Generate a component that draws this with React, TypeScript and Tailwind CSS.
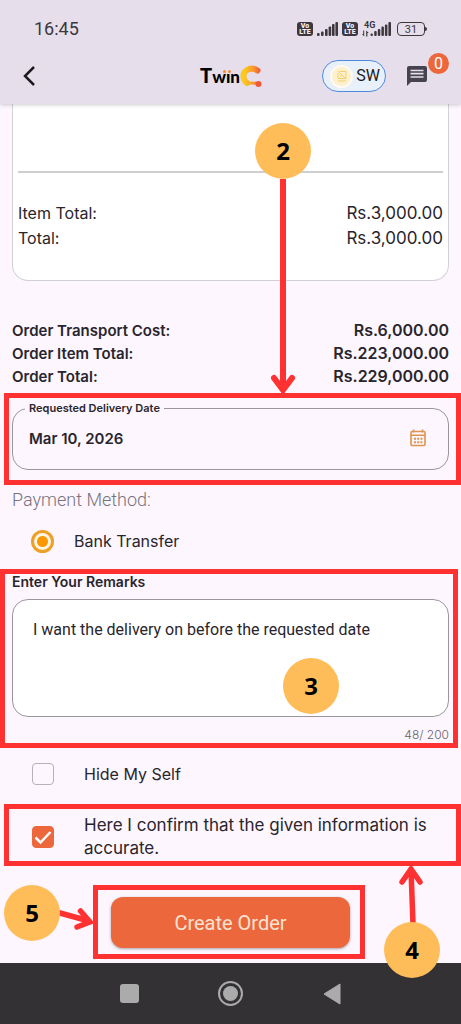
import { useState } from 'react'

const MAX_REMARKS = 200

const itemTotals = [
  { label: 'Item Total:', value: 'Rs.3,000.00' },
  { label: 'Total:', value: 'Rs.3,000.00' },
]

const orderTotals = [
  { label: 'Order Transport Cost:', value: 'Rs.6,000.00' },
  { label: 'Order Item Total:', value: 'Rs.223,000.00' },
  { label: 'Order Total:', value: 'Rs.229,000.00' },
]

const StepBadge = ({ step, className }: { step: number; className: string }) => (
  <span
    className={`absolute z-20 flex size-14 items-center justify-center rounded-full bg-[#ffbd59] font-['Noto_Sans',sans-serif] text-2xl font-bold text-black ${className}`}
  >
    {step}
  </span>
)

const Highlight = ({ className }: { className: string }) => (
  <span className={`pointer-events-none absolute z-10 border-5 border-[#ff3131] ${className}`} />
)

const VolteIcon = () => (
  <span className="flex h-[14px] w-4 flex-col items-center justify-center rounded-[3px] bg-[#3c383e] text-[7px] leading-[6px] font-black text-[#f4eef8]">
    <span>Vo</span>
    <span>LTE</span>
  </span>
)

const SignalIcon = () => (
  <svg viewBox="0 0 21 14" className="h-[14px] w-[21px]" fill="#3c383e">
    <rect x="0" y="11" width="2.6" height="3" rx="1" />
    <rect x="4" y="9.5" width="2.6" height="4.5" rx="1" />
    <rect x="8" y="7" width="2.6" height="7" rx="1" />
    <rect x="11.6" y="4.5" width="2.6" height="9.5" rx="1" />
    <rect x="15" y="2" width="2.6" height="12" rx="1" />
    <rect x="18.4" y="0" width="2.6" height="14" rx="1" />
  </svg>
)

const DataSignalIcon = () => (
  <span className="relative block h-4 w-[29px]">
    <span className="absolute top-0 left-0.5 text-[9px] leading-[8px] font-bold">4G</span>
    <svg viewBox="0 0 29 16" className="h-4 w-[29px]" fill="#3c383e">
      <path d="M2.2 9.5v6L0 13h1.2V9.5zM4.2 15.5v-6L6.8 12H5.4v3.5z" />
      <rect x="8.5" y="12.5" width="2.4" height="2.5" rx="1" />
      <rect x="12.2" y="10" width="2.5" height="5" rx="1" />
      <rect x="15.8" y="8" width="2.5" height="7" rx="1" />
      <rect x="19.4" y="5.5" width="2.5" height="9.5" rx="1" />
      <rect x="22.9" y="3.5" width="2.5" height="11.5" rx="1" />
      <rect x="26.4" y="1" width="2.6" height="14" rx="1" />
    </svg>
  </span>
)

const BatteryIcon = () => (
  <span className="flex items-center">
    <span className="flex h-[14px] w-7 items-center justify-center rounded-[4px] border border-[#3c383e] text-[11px] leading-none">
      31
    </span>
    <span className="h-1 w-0.5 rounded-r-sm bg-[#3c383e]" />
  </span>
)

const Logo = () => (
  <span className="flex items-end" role="img" aria-label="TwinC">
    <span className="relative flex items-baseline font-['Lato',sans-serif] font-black text-black">
      <span className="text-xl leading-6">T</span>
      <span className="text-[17px] leading-6">wın</span>
      <span className="absolute top-[7px] right-[9px] flex gap-0.5">
        <span className="size-[3px] rounded-full bg-[#f58a2b]" />
        <span className="size-[3px] rounded-full bg-[#f58a2b]" />
      </span>
    </span>
    <svg viewBox="0 0 22 24" className="h-6 w-[22px]">
      <defs>
        <linearGradient id="logo-c" gradientUnits="userSpaceOnUse" x1="0" x2="22" y1="12" y2="12">
          <stop offset="0.2" stopColor="#fdc822" />
          <stop offset="0.6" stopColor="#fa9a2e" />
          <stop offset="1" stopColor="#ec4a38" />
        </linearGradient>
      </defs>
      <g fill="none" stroke="url(#logo-c)" strokeLinecap="round">
        <path d="M17.5 5.5Q12 2 7 5T4 14Q5 17 7 18" strokeWidth="6" />
        <path d="M6 19Q12 17 18 19" strokeWidth="3" />
      </g>
      <circle cx="18.5" cy="19" r="3" fill="#ee5a36" />
    </svg>
  </span>
)

const ImageOffIcon = () => (
  <svg viewBox="0 0 10 12" className="h-3 w-[10px]" fill="none" stroke="#f3cf6d" strokeWidth="1">
    <path d="M1 1l8 8M3 1.5h6V8M1 3v5.5h7M3 6.5l2-1.5 1.5 1.5M1 11h8" />
  </svg>
)

const ChatIcon = () => (
  <svg viewBox="0 0 22 22" className="size-[22px]">
    <path d="M3 1h16a2 2 0 0 1 2 2v12a2 2 0 0 1-2 2H5l-4 4V3a2 2 0 0 1 2-2z" fill="#47424f" />
    <path d="M4.5 5.5h13M4.5 8.7h13M4.5 12h13" stroke="#e6dfeb" strokeWidth="1.7" />
  </svg>
)

const CalendarIcon = () => (
  <svg viewBox="0 0 16 18" className="h-[18px] w-4" fill="none" stroke="#dd9450" strokeWidth="1.6">
    <rect x="1" y="2.5" width="14" height="14" rx="1" />
    <path d="M1 6.2h14M3.5 .5v3M12.5 .5v3" />
    <path d="M4 9.8h8.5M4 13.2h8.5" strokeWidth="2" strokeDasharray="2 1.2" />
  </svg>
)

const Header = () => (
  <header className="relative z-10 bg-[#e6dfeb] font-['Roboto',sans-serif] text-[#3c383e] shadow-[0_1px_4px_rgba(0,0,0,0.2)]">
    <div className="flex h-12 items-center justify-between px-[34px] pt-[10px]">
      <span className="text-lg">16:45</span>
      <div className="flex items-center gap-1">
        <VolteIcon />
        <SignalIcon />
        <VolteIcon />
        <DataSignalIcon />
        <span className="pl-0.5">
          <BatteryIcon />
        </span>
      </div>
    </div>
    <div className="grid h-14 grid-cols-[1fr_auto_1fr] items-center pr-[33px] pl-[22px]">
      <button type="button" aria-label="Back" className="w-4">
        <svg viewBox="0 0 16 22" className="h-[22px] w-4" fill="none" stroke="#1d1a20" strokeWidth="2.5">
          <path d="M12 2L3 11l9 9" />
        </svg>
      </button>
      <div className="pl-3">
        <Logo />
      </div>
      <div className="flex items-center justify-end gap-5">
        <button
          type="button"
          className="flex h-8 w-16 shrink-0 items-center justify-between rounded-full border border-[#4f8ade] bg-[#e8f0fb] pr-[5px] pl-[7px] text-base text-[#1d1a20]"
        >
          <span className="flex size-[23px] items-center justify-center rounded-full border-2 border-[#fffaf0] bg-[#fdf0cf]">
            <ImageOffIcon />
          </span>
          SW
        </button>
        <button type="button" aria-label="Messages" className="relative">
          <ChatIcon />
          <span className="absolute -top-3 -right-[21px] flex size-[21px] items-center justify-center rounded-full bg-[#ec673c] text-base leading-none text-white">
            0
          </span>
        </button>
      </div>
    </div>
  </header>
)

const NavigationBar = () => (
  <nav className="mt-auto flex h-[61px] items-center justify-center gap-20 bg-[#343135]">
    <button type="button" aria-label="Recent apps" className="flex w-[21px] justify-center">
      <span className="size-[19px] rounded-[3px] bg-[#ababab]" />
    </button>
    <button type="button" aria-label="Home" className="flex w-[21px] justify-center">
      <span className="flex size-[25px] shrink-0 items-center justify-center rounded-full border-2 border-[#ababab]">
        <span className="size-[15px] rounded-full bg-[#ababab]" />
      </span>
    </button>
    <button type="button" aria-label="Back" className="flex w-[21px] justify-center">
      <svg viewBox="0 0 18 22" className="h-[22px] w-[18px]" fill="#ababab">
        <path d="M17 1v20L1 11z" stroke="#ababab" strokeLinejoin="round" />
      </svg>
    </button>
  </nav>
)

export default function App() {
  const [remarks, setRemarks] = useState('I want the delivery on before the requested date')
  const [hideMyself, setHideMyself] = useState(false)
  const [confirmed, setConfirmed] = useState(true)

  return (
    <div className="flex min-h-screen flex-col overflow-hidden bg-[#fdf6ff] font-['Inter',sans-serif] text-[#29252c]">
      <Header />

      <main className="px-3">
        <section className="relative rounded-b-2xl border border-t-0 border-[#d2d2d6] bg-white px-[5px] pt-[67px] pb-[29px]">
          <hr className="border-t-2 border-[#cfcfd1]" />
          <dl className="pt-7 text-base leading-[25px]">
            {itemTotals.map((row) => (
              <div key={row.label} className="flex justify-between">
                <dt>{row.label}</dt>
                <dd className="text-[17px]">{row.value}</dd>
              </div>
            ))}
          </dl>
          <StepBadge step={2} className="top-[19px] right-[137px]" />
          <svg
            viewBox="0 0 24 216"
            className="absolute top-[75px] right-[153px] z-10 h-[216px] w-6"
            fill="none"
            stroke="#ff3131"
            strokeWidth="6"
            strokeLinecap="round"
          >
            <path d="M12 0v210M3 199l9 12 9-12" />
          </svg>
        </section>

        <dl className="pt-[38px] text-[15px] leading-[23px] font-semibold">
          {orderTotals.map((row) => (
            <div key={row.label} className="flex justify-between">
              <dt>{row.label}</dt>
              <dd className="text-base leading-[23px]">{row.value}</dd>
            </div>
          ))}
        </dl>

        <section className="relative mt-[14px]">
          <Highlight className="-top-[9px] -right-3 -left-2 h-[92px]" />
          <fieldset className="rounded-2xl border border-[#9a969d] px-3 pb-[19px]">
            <legend className="px-1 text-[11px] leading-[13px] font-semibold">
              <label htmlFor="delivery-date">Requested Delivery Date</label>
            </legend>
            <div className="flex items-center justify-between pt-[11px] pr-[10px] pl-1">
              <input
                id="delivery-date"
                readOnly
                defaultValue="Mar 10, 2026"
                className="h-6 w-40 bg-transparent text-[15px] font-semibold outline-none"
              />
              <button type="button" aria-label="Pick a date">
                <CalendarIcon />
              </button>
            </div>
          </fieldset>
        </section>

        <section className="pt-[18px]">
          <h2 className="font-['Roboto',sans-serif] text-lg leading-6 font-light text-[#77737b]">Payment Method:</h2>
          <label className="mt-[17px] flex h-6 items-center gap-5 pl-[19px] text-base">
            <input
              type="radio"
              name="payment"
              defaultChecked
              className="size-[23px] appearance-none rounded-full border-[3px] border-[#ee9f26] bg-[#fff6e6] bg-[radial-gradient(circle,#fb9800_5px,transparent_6px)]"
            />
            Bank Transfer
          </label>
        </section>

        <section className="relative mt-[19px]">
          <Highlight className="-top-[3px] -right-[9px] -left-3 h-[179px]" />
          <label htmlFor="remarks" className="block text-sm leading-5 font-semibold">
            Enter Your Remarks
          </label>
          <textarea
            id="remarks"
            maxLength={MAX_REMARKS}
            value={remarks}
            onChange={(event) => setRemarks(event.target.value)}
            className="mt-[7px] block h-[118px] w-full resize-none rounded-2xl border border-[#9a969d] bg-white px-5 py-[18px] font-['Roboto',sans-serif] text-base outline-none"
          />
          <p className="pt-2 text-right text-xs leading-5 font-light text-[#67636b]">
            {remarks.length}/ {MAX_REMARKS}
          </p>
          <StepBadge step={3} className="top-[86px] right-[110px]" />
        </section>

        <label className="mt-[17px] flex h-6 items-center gap-[30px] pl-5 text-base">
          <input
            type="checkbox"
            checked={hideMyself}
            onChange={(event) => setHideMyself(event.target.checked)}
            className="size-[22px] shrink-0 appearance-none rounded-sm border border-[#b5b1b8] checked:bg-[#ec673c]"
          />
          Hide My Self
        </label>

        <section className="relative mt-7">
          <Highlight className="-top-[10px] -right-3 -left-2 h-[62px]" />
          <label className="flex items-center gap-[30px] pl-5 text-[17px] leading-[23px]">
            <span className="relative flex size-[22px] shrink-0">
              <input
                type="checkbox"
                checked={confirmed}
                onChange={(event) => setConfirmed(event.target.checked)}
                className="size-[22px] appearance-none rounded-sm border border-[#b5b1b8] checked:border-[#ec673c] checked:bg-[#ec673c]"
              />
              {confirmed && (
                <svg
                  viewBox="0 0 22 22"
                  className="pointer-events-none absolute inset-0 size-[22px]"
                  fill="none"
                  stroke="#fff"
                  strokeWidth="2.5"
                >
                  <path d="M3.5 11.5l5 5L18.5 6" />
                </svg>
              )}
            </span>
            Here I confirm that the given information is accurate.
          </label>
        </section>

        <section className="relative flex justify-center pt-[37px] pb-[15px]">
          <div className="relative">
            <Highlight className="-top-3 -right-[15px] -left-[18px] h-[74px]" />
            <button
              type="button"
              className="block h-[51px] w-[239px] rounded-xl bg-[#ec673c] font-['Roboto',sans-serif] text-xl text-[#fbe3d3] shadow-[0_1px_3px_rgba(0,0,0,0.35)]"
            >
              Create Order
            </button>
            <StepBadge step={5} className="-top-3 -left-[107px]" />
            <svg
              viewBox="0 0 34 24"
              className="absolute top-[11px] -left-[52px] z-10 h-6 w-[34px]"
              fill="none"
              stroke="#ff3131"
              strokeWidth="5.5"
              strokeLinecap="round"
            >
              <path d="M1 5l29 8M21.5 3L31 14l-13 5" />
            </svg>
          </div>
          <StepBadge step={4} className="top-[62px] right-[9px]" />
          <svg
            viewBox="0 0 24 60"
            className="absolute top-1 right-[26px] z-10 h-[60px] w-6"
            fill="none"
            stroke="#ff3131"
            strokeWidth="5.5"
            strokeLinecap="round"
          >
            <path d="M14 60L12 5M3 18l9-13 9 13" />
          </svg>
        </section>
      </main>

      <NavigationBar />
    </div>
  )
}
